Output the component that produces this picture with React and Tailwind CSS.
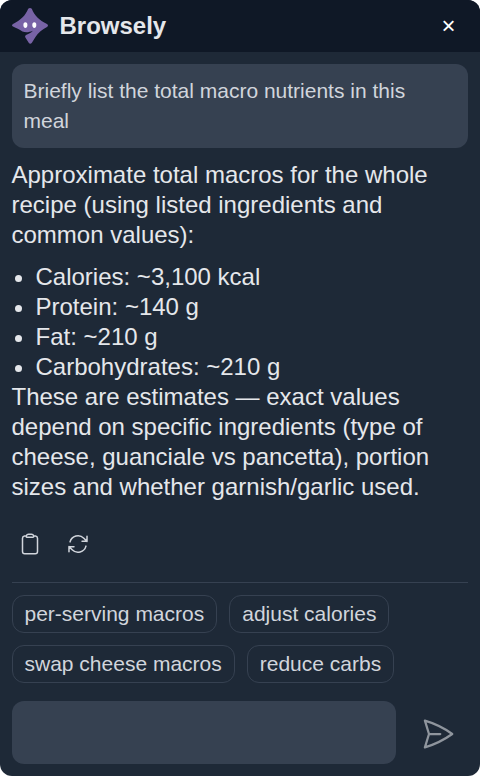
import { useState } from 'react';
import { HiOutlineClipboard, HiOutlineArrowPath, HiOutlinePaperAirplane } from 'react-icons/hi2';

const macros = [
    'Calories: ~3,100 kcal',
    'Protein: ~140 g',
    'Fat: ~210 g',
    'Carbohydrates: ~210 g'
];

const suggestions = ['per-serving macros', 'adjust calories', 'swap cheese macros', 'reduce carbs'];

const Logo = () => (
    <svg viewBox="0 0 36 36" className="w-9 h-9" aria-hidden="true">
        <path
            d="M16.2 0.8Q18 -0.8 19.8 0.8C22.4 7.6 27.2 12.4 35 16Q37 17.4 35 18.9C30.3 21.3 26.2 24.4 23.3 29.2L19.9 34.7Q18.2 36.8 16.7 34.7L13.4 29.5Q12.6 28 14 27.1C17 25.4 19.8 24.8 20.8 22.8C17 24.4 13.8 24.8 10.4 23.5C7.3 21.3 4.5 20.2 1 18.6Q-1 17.2 1 15.9C8.5 12.4 13.4 7.7 16.2 0.8Z"
            fill="#7863a6"
        />
        <ellipse cx="13.4" cy="17.1" rx="2" ry="2.8" fill="#fff" />
        <ellipse cx="22.3" cy="17.1" rx="2" ry="2.8" fill="#fff" />
    </svg>
);

const App = () => {
    const [message, setMessage] = useState('');

    return (
        <div className="h-screen flex flex-col rounded-xl overflow-hidden bg-[#1e2937] text-gray-200 font-['Liberation_Sans',sans-serif]">
            <header className="h-[52px] shrink-0 flex items-center justify-between pl-[11.5px] pr-[11.5px] bg-[#0f1826]">
                <div className="flex items-center gap-3">
                    <Logo />
                    <h1 className="text-2xl leading-9 font-bold">Browsely</h1>
                </div>
                <button aria-label="Close" className="w-10 h-9 text-2xl leading-9 text-center text-white">×</button>
            </header>

            <main className="flex-1 flex flex-col pl-[11.5px] pr-3 pt-3">
                <div className="rounded-xl bg-[#364151] p-3 text-[21px] leading-[30px] text-gray-300">
                    Briefly list the total macro nutrients in this meal
                </div>

                <div className="mt-3 text-2xl leading-[30px]">
                    <p className="mb-3">
                        Approximate total macros for the whole recipe (using listed ingredients and common values):
                    </p>
                    <ul className="list-disc pl-6">
                        {macros.map((macro) => (
                            <li key={macro}>{macro}</li>
                        ))}
                    </ul>
                    <p>
                        These are estimates — exact values depend on specific ingredients (type of cheese, guanciale vs pancetta), portion sizes and whether garnish/garlic used.
                    </p>
                </div>

                {/* Response actions */}
                <div className="flex gap-6 mt-[30px] px-1.5 text-2xl text-gray-300">
                    <button aria-label="Copy"><HiOutlineClipboard /></button>
                    <button aria-label="Regenerate"><HiOutlineArrowPath /></button>
                </div>

                {/* Suggested follow ups */}
                <div className="mt-[26px] pt-3 border-t border-[#364151] flex flex-wrap gap-3">
                    {suggestions.map((suggestion) => (
                        <button
                            key={suggestion}
                            onClick={() => setMessage(suggestion)}
                            className="h-[38px] px-3 rounded-xl border border-[#364151] text-[21px] leading-[30px] text-gray-300"
                        >
                            {suggestion}
                        </button>
                    ))}
                </div>
            </main>

            <footer className="flex items-center gap-3 px-3 pb-3">
                <textarea
                    value={message}
                    onChange={(e) => setMessage(e.target.value)}
                    className="flex-1 h-[63px] p-3 rounded-xl bg-[#364151] text-[21px] resize-none outline-none"
                />
                <button aria-label="Send" className="w-15 pt-0.5 flex justify-center text-4xl text-[#8f959d]">
                    <HiOutlinePaperAirplane />
                </button>
            </footer>
        </div>
    );
};

export default App;
